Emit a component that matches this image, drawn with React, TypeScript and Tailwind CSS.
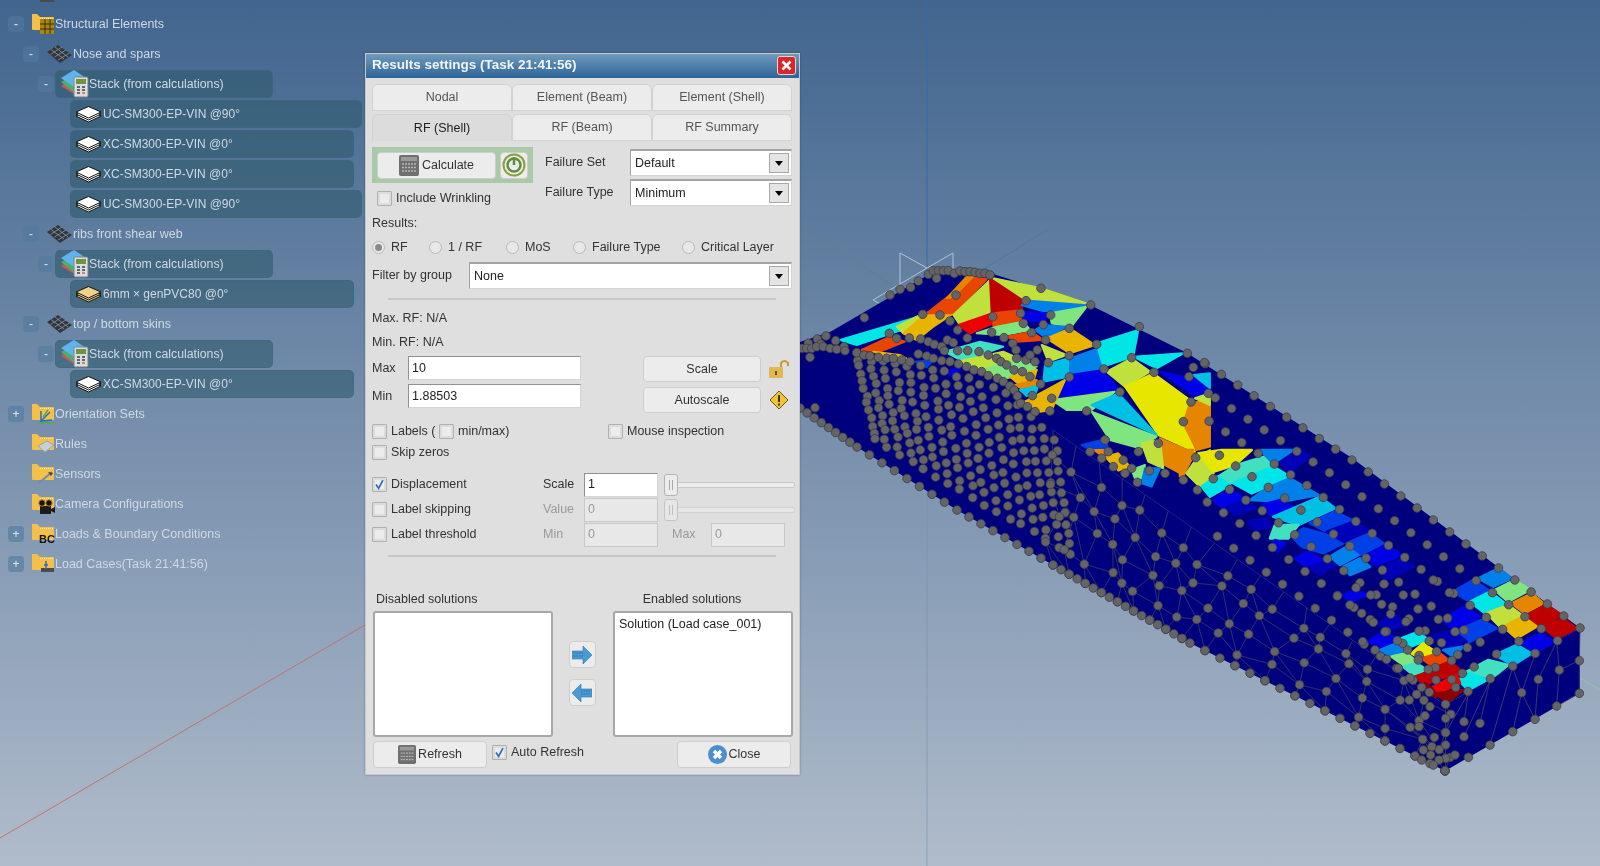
import type { ReactNode } from "react";

type Pt = [number, number];

// ---------- 3D scene data ----------
const lerpPath = (pts: Pt[], t: number): Pt => {
  const f = Math.min(t, 0.9999) * (pts.length - 1);
  const i = Math.floor(f);
  const k = f - i;
  return [pts[i][0] + (pts[i + 1][0] - pts[i][0]) * k, pts[i][1] + (pts[i + 1][1] - pts[i][1]) * k];
};
const noise = (a: number, b: number) => {
  const v = Math.sin(a * 12.9898 + b * 78.233) * 43758.5453;
  return v - Math.floor(v) - 0.5;
};
const yAt = (pts: Pt[], x: number) => {
  for (let i = 0; i < pts.length - 1; i++) {
    if (x <= pts[i + 1][0]) {
      const k = (x - pts[i][0]) / (pts[i + 1][0] - pts[i][0]);
      return pts[i][1] + (pts[i + 1][1] - pts[i][1]) * k;
    }
  }
  return pts[pts.length - 1][1];
};

const arc: Pt[] = [[800, 348], [857, 352], [923, 357], [967, 367], [1007, 383], [1030, 407], [1053, 430]];
const bottom: Pt[] = [[800, 408], [857, 447], [957, 510], [1053, 565], [1190, 643], [1445, 771]];

const c = {
  maroon: "#8c0000", dred: "#bf0000", red: "#ee0000", ored: "#e84500", orange: "#e68500",
  amber: "#e8b400", yellow: "#e6e600", lime: "#c0e03c", green: "#7fe67f", teal: "#40e0c0",
  cyan: "#00e5e5", sky: "#00bfe5", azure: "#0080e8", blue: "#0040e8", blue2: "#0000e8", dblue: "#0000b8",
};

// polygons read off the nose area
const nosePolys: [string, string][] = [
  [c.cyan, "150,330 385,260 350,295 200,345"],
  [c.lime, "320,290 385,258 410,250 340,310"],
  [c.amber, "340,310 410,250 490,250 430,290 380,330"],
  [c.ored, "410,250 550,140 590,148 490,250"],
  [c.orange, "470,205 530,140 550,140 490,200"],
  [c.lime, "490,255 600,150 605,250 510,285"],
  [c.dred, "600,145 700,210 695,240 605,248"],
  [c.red, "505,285 605,250 610,280 540,310"],
  [c.ored, "610,250 695,240 700,275 610,290"],
  [c.green, "560,310 620,290 700,275 720,300 640,315"],
  [c.azure, "695,225 740,205 890,225 780,250"],
  [c.blue2, "695,245 780,250 760,275 700,270"],
  [c.green, "780,250 890,230 840,295 785,280"],
  [c.lime, "610,145 755,175 890,220 700,205"],
  [c.azure, "735,300 760,285 830,290 770,325"],
  [c.ored, "650,320 725,305 760,330 680,335"],
  [c.amber, "770,325 840,295 915,345 840,370"],
  [c.lime, "755,345 830,375 775,395"],
  [c.sky, "765,405 835,385 835,440 760,455"],
  [c.azure, "840,385 925,355 935,415 840,435"],
  [c.cyan, "920,340 1045,300 1030,380 940,410"],
  [c.lime, "950,425 1025,385 1080,425 1005,470"],
  [c.yellow, "1005,470 1090,430 1200,510 1180,570 1215,665 1105,615"],
  [c.blue2, "795,500 840,435 940,420 985,480"],
  [c.green, "785,510 975,485 905,540 830,540"],
  [c.sky, "905,525 985,490 1100,615"],
  [c.green, "905,545 1100,620 1050,655 960,630"],
  [c.amber, "705,515 825,450 785,540 750,545"],
  [c.orange, "1110,625 1215,670 1180,735 1115,700"],
  [c.lime, "1055,640 1110,630 1120,715 1075,695"],
  [c.orange, "1180,580 1200,520 1260,510 1260,650 1220,660"],
  [c.lime, "1190,730 1220,685 1260,660 1260,740 1225,765"],
  [c.cyan, "1030,380 1180,370 1100,415"],
  [c.blue2, "1110,425 1200,445 1260,465 1225,505"],
  [c.sky, "1210,435 1260,430 1260,475"],
  [c.lime, "1215,505 1260,490 1260,525"],
  [c.cyan, "1235,760 1260,740 1260,795"],
  // small strips by the nose lip
  [c.ored, "215,360 300,320 345,335 270,365"],
  [c.amber, "250,365 330,375 360,392 300,385"],
  [c.teal, "465,365 570,335 640,350 520,395"],
  [c.lime, "500,395 640,365 740,410 620,440"],
  [c.green, "590,415 700,385 740,420 650,445"],
  [c.amber, "660,440 740,420 730,455 690,465"],
  [c.orange, "675,465 740,450 745,465 700,478"],
  [c.sky, "690,480 745,468 735,495 710,498"],
  [c.blue, "375,395 430,390 410,412"],
  [c.blue2, "460,425 510,415 490,440"],
  [c.blue, "875,645 945,628 955,655 900,660"],
  [c.orange, "912,660 945,660 940,680"],
  [c.amber, "945,680 985,670 1020,710 985,722"],
  [c.green, "1025,720 1065,705 1060,745 1035,745"],
  [c.azure, "1065,715 1110,715 1085,770 1055,760"],
];

// polygons read off the far end of the wing
const tailPolys: [string, string][] = [
  [c.orange, "0,0 40,0 10,75 0,78"],
  [c.lime, "20,70 50,30 100,70 60,110"],
  [c.yellow, "55,10 125,0 215,0 165,45 100,65"],
  [c.teal, "115,80 170,45 270,15 280,45 215,70 150,100"],
  [c.azure, "240,0 340,0 280,40"],
  [c.dblue, "300,40 360,0 390,20 330,65"],
  [c.cyan, "65,110 110,80 150,105 90,140"],
  [c.cyan, "160,100 280,50 330,80 215,130"],
  [c.blue2, "100,150 150,120 195,145 130,175"],
  [c.dblue, "140,170 190,150 225,175 165,195"],
  [c.azure, "210,150 260,115 330,85 415,135 305,155"],
  [c.blue2, "245,165 300,150 345,175 270,195"],
  [c.sky, "280,200 340,175 420,140 465,175 355,225"],
  [c.teal, "270,265 285,225 355,225 325,265"],
  [c.blue, "390,220 465,185 515,210 440,245"],
  [c.dblue, "205,215 265,205 270,230 225,240"],
  [c.blue, "335,260 370,235 445,255 490,280 430,310 365,290"],
  [c.dblue, "440,245 520,215 565,240 490,275"],
  [c.blue, "500,280 570,250 610,280 540,315"],
  [c.blue2, "345,325 385,305 435,335 380,350"],
  [c.dblue, "385,350 435,335 465,345 420,375"],
  [c.azure, "450,320 500,290 535,315 480,345"],
  [c.azure, "490,350 540,325 570,350 510,375"],
  [c.blue2, "555,320 620,285 665,315 590,345"],
  [c.dblue, "595,360 665,325 700,350 620,390"],
  [c.blue2, "490,435 530,420 560,435 510,455"],
  [c.blue2, "270,290 285,270 315,280 290,305"],
  [c.blue, "820,425 880,390 925,420 860,450"],
  [c.azure, "895,385 955,355 995,385 940,410"],
  [c.cyan, "870,455 930,425 975,460 915,490"],
  [c.green, "945,420 1005,390 1050,420 985,455"],
  [c.orange, "995,460 1055,430 1090,460 1035,490"],
  [c.lime, "920,490 985,465 1025,495 960,530"],
  [c.dred, "1040,495 1100,465 1145,495 1080,530"],
  [c.dred, "1085,530 1150,505 1190,535 1130,565"],
  [c.amber, "970,530 1030,500 1070,530 1010,565"],
  [c.blue2, "785,510 855,470 900,500 825,540"],
  [c.blue, "835,540 905,510 950,535 860,580"],
  [c.blue2, "1025,580 1080,550 1125,575 1065,605"],
  [c.dblue, "760,560 815,540 860,575 800,600"],
  [c.sky, "945,615 1010,585 1055,610 1000,645"],
  [c.teal, "860,665 925,630 985,645 935,685"],
  [c.cyan, "835,690 870,670 920,690 865,720"],
  [c.azure, "790,600 850,590 820,620"],
  [c.dblue, "595,520 640,495 680,520 620,545"],
  [c.blue2, "565,575 610,545 660,570 600,590"],
  [c.cyan, "665,565 715,545 745,570 690,590"],
  [c.azure, "600,600 650,580 680,600 635,620"],
  [c.yellow, "695,610 730,580 765,605 720,625"],
  [c.green, "635,620 680,610 710,635 670,645"],
  [c.teal, "670,650 710,640 740,660 700,675"],
  [c.ored, "725,625 780,610 810,635 760,650"],
  [c.dred, "745,660 810,635 840,660 830,680 765,685"],
  [c.dred, "705,680 745,665 765,690 735,705"],
  [c.red, "760,710 830,675 840,700 775,730"],
  [c.maroon, "770,730 850,720 800,760"],
  [c.maroon, "735,700 760,720 770,740 750,735"],
];

const z6 = (p: number[]): Pt => [790 + p[0] / 3, 230 + p[1] / 3];
const z7 = (p: number[]): Pt => [1180 + p[0] / 3, 450 + p[1] / 3];

const noseNodes: number[][] = [
  [753,175],[902,225],[1048,290],[1192,370],[1210,412],[1243,398],[1197,440],[1025,383],[1092,427],[920,343],[942,417],[838,295],[990,486],[1203,516],[1180,575],[1255,490],[1105,640],[1217,683],[1045,665],[1078,722],[1125,730],[1180,750],[1222,780],[945,630],[890,543],[838,377],[838,441],[775,398],[767,330],[708,212],[692,250],[782,255],[760,284],[700,280],[725,308],[608,260],[605,307],[642,323],[498,195],[398,253],[450,255],[480,273],[503,300],[532,324],[472,330],[490,338],[223,263],[298,310],[358,324],[320,325],[392,327],[415,335],[433,343],[455,350],[463,362],[503,362],[533,362],[567,365],[595,375],[620,385],[633,395],[650,405],[672,420],[697,425],[720,440],[752,462],[785,505],[780,543],[727,497],[668,340],[678,360],[680,385],[708,390],[720,375],[742,360],[735,395],[108,318],[137,332],[162,350],[55,340],[82,327],[92,342],[60,382],[75,533],
  [300,195],[330,178],[362,172],[385,153],[415,133],[430,122],[445,122],[460,122],[475,122],[493,130],[510,123],[525,125],[540,125],[555,127],[570,130],[585,130],[600,135],[440,145],
  [35,355],[50,355],[65,355],[80,350],[100,350],[120,355],[140,358],[165,362],[200,368],[222,375],[240,378],[265,382],[290,385],[310,385],[335,390],[360,395],[385,372],[410,378],[430,385],[455,392],[480,395],[505,402],[530,410],[552,420],[575,425],[595,437],[622,445],[640,455],[660,468],[672,480],[682,498],[692,520],[712,530],[735,545],
  [945,630],[900,665],[955,665],[935,685],[970,710],[1000,690],[1025,715],[1005,730],[1042,757],
];

const tailNodes: number[][] = [
  [1198,632],[1198,730],[1138,660],[1130,768],[1075,688],[1025,728],[1065,808],[998,845],[930,885],[865,922],[900,820],[852,860],[852,815],[825,915],[797,848],[797,885],[797,925],[777,930],[760,945],[795,962],[755,890],[763,862],[730,900],[752,915],[725,930],[797,805],[735,797],[717,830],[688,750],[750,770],[710,733],
  [745,658],[768,690],[827,712],[715,630],[683,600],[652,572],[717,543],[748,573],[770,605],[815,632],[847,670],[678,515],[632,492],[615,545],[580,517],[548,575],[585,600],[620,628],[655,655],[690,684],[725,712],
  [612,402],[528,413],[572,435],[472,438],[510,465],[545,490],[605,463],[670,435],[714,477],[760,390],[808,428],[775,508],[825,545],[862,593],
];

// fan of mesh lines on the end face
const endLines: number[][] = [
  [797,768,797,962],[865,730,797,848],[865,730,852,815],[930,692,852,860],[930,692,900,820],[998,652,930,885],[998,652,1025,728],[1065,613,1025,728],[1025,728,998,845],[1025,728,1065,808],[1075,688,1065,808],[1130,575,1075,688],[1130,575,1138,660],[1138,660,1130,768],[1200,535,1198,632],[1198,632,1198,730],[1138,660,1198,632],[1198,730,1130,768],
];

// lattice on the top face, far end (the rows bend a little as they go back)
const latticeNodes: Pt[] = [];
for (let i = 0; i <= 26; i++) {
  for (let j = 0; j <= 6; j++) {
    const x = 1580 - 16.3 * i - 22.4 * j;
    const y = 628 - 12 * i + 12.7 * j + Math.max(0, i - 14) * 1.3;
    if (x > 1205) latticeNodes.push([x, y]);
  }
}

// dense region of the side face (nose rib)
const denseNodes: Pt[] = [];
for (let col = 0; col <= 16; col++) {
  const x = 857 + (196 * col) / 16;
  const top = yAt(arc, x);
  const bot = yAt(bottom, x);
  const rows = 13;
  for (let r = 1; r < rows; r++) {
    denseNodes.push([x + r * 1.5 + noise(col, r) * 3, top + ((bot - top) * r) / rows + noise(r, col) * 3]);
  }
}

// sparse grid of the side face
const sideTop: Pt[] = [[1053, 430], [1445, 705]];
const sideBot: Pt[] = [[1053, 565], [1190, 643], [1445, 771]];
const COLS = 17;
const ROWS = 5;
const sideGrid: Pt[][] = [];
for (let k = 0; k <= COLS; k++) {
  const t = lerpPath(sideTop, k / COLS);
  const b = lerpPath(sideBot, k / COLS);
  const col: Pt[] = [];
  for (let r = 0; r <= ROWS; r++) {
    const edge = r === 0 || r === ROWS;
    const jx = edge ? 0 : noise(k + 3, r) * 16;
    const jy = edge ? 0 : noise(r + 7, k) * 12;
    col.push([t[0] + ((b[0] - t[0]) * r) / ROWS + jx, t[1] + ((b[1] - t[1]) * r) / ROWS + jy]);
  }
  sideGrid.push(col);
}
const sideLines: [Pt, Pt][] = [];
sideGrid.forEach((col, k) =>
  col.forEach((p, r) => {
    if (r < ROWS) sideLines.push([p, col[r + 1]]);
    if (k < COLS && r > 0 && r < ROWS) sideLines.push([p, sideGrid[k + 1][r]]);
    if (k < COLS && r > 0 && r < ROWS && (k + r) % 2 === 0) sideLines.push([p, sideGrid[k + 1][r + 1]]);
  })
);

// nodes along the lower edge
const edgeNodes: Pt[] = [];
for (let i = 0; i <= 24; i++) edgeNodes.push(lerpPath(bottom.slice(0, 4), i / 24));
for (let i = 1; i <= 34; i++) edgeNodes.push(lerpPath([[1053, 565], [1190, 643], [1445, 771]], i / 34));

const allNodes: Pt[] = [
  ...denseNodes,
  ...sideGrid.flat().filter((_, i) => i % 6 !== 0),
  ...edgeNodes,
  ...latticeNodes,
  ...noseNodes.map(z6),
  ...tailNodes.map(z7),
];

function Scene() {
  return (
    <svg className="absolute inset-0" width={1600} height={866} viewBox="0 0 1600 866">
      <line x1="927" y1="0" x2="927" y2="280" stroke="#3a68a8" strokeWidth="1" />
      <line x1="927" y1="280" x2="927" y2="866" stroke="#7690ae" strokeWidth="1" opacity="0.6" />
      <line x1="0" y1="838" x2="365" y2="625" stroke="#c4716f" strokeWidth="1" />
      <line x1="1580" y1="678" x2="1600" y2="690" stroke="#8fc8a0" strokeWidth="1" />
      <line x1="806" y1="230" x2="900" y2="290" stroke="#5f7f88" strokeWidth="0.7" />
      <line x1="1047" y1="230" x2="976" y2="274" stroke="#56718c" strokeWidth="0.7" />
      <polyline points="900,293 900,253 927,268 953,253 953,272" fill="none" stroke="#b4c2d4" strokeWidth="1" />
      <line x1="873" y1="300" x2="927" y2="268" stroke="#b4c2d4" strokeWidth="1" />
      <line x1="873" y1="300" x2="884" y2="306" stroke="#b4c2d4" strokeWidth="1" />

      {/* top face */}
      <polygon points="800,342 830,332 940,268 990,273 1090,305 1187,353 1352,458 1580,628 1445,705 1053,430 800,348" fill="#00007f" />
      {/* side face */}
      <polygon points={[...arc, [1445, 705], [1445, 771], ...[...bottom].reverse().slice(1)].join(" ")} fill="#00007f" />
      {/* end face */}
      <polygon points="1445,705 1580,628 1580,693 1445,771" fill="#00007f" />

      <g transform="translate(790 230) scale(0.3333)">
        {nosePolys.map(([fill, points], i) => (
          <polygon key={i} points={points} fill={fill} stroke={fill} strokeWidth="6" strokeLinejoin="round" />
        ))}
      </g>
      <g transform="translate(1180 450) scale(0.3333)">
        {tailPolys.map(([fill, points], i) => (
          <polygon key={i} points={points} fill={fill} stroke={fill} strokeWidth="8" strokeLinejoin="round" />
        ))}
        {endLines.map((l, i) => (
          <line key={i} x1={l[0]} y1={l[1]} x2={l[2]} y2={l[3]} stroke="#38386a" strokeWidth="3" />
        ))}
      </g>

      {sideLines.map(([a, b], i) => (
        <line key={i} x1={a[0]} y1={a[1]} x2={b[0]} y2={b[1]} stroke="#30306a" strokeWidth="1" />
      ))}
      {allNodes.map(([x, y], i) => (
        <circle key={i} cx={x} cy={y} r="4.3" fill="#646464" stroke="#3c3c4c" strokeWidth="0.8" />
      ))}
    </svg>
  );
}

// ---------- tree icons ----------
function Folder({ children }: { children?: ReactNode }) {
  return (
    <svg width="23" height="22" viewBox="0 0 23 22" className="shrink-0">
      <path d="M0 1h5l3 3h13a1 1 0 0 1 1 1v11a1 1 0 0 1-1 1H1a1 1 0 0 1-1-1z" fill="#f4c04a" />
      <path d="M8 5.500h13" stroke="#fbe7a8" strokeDasharray="1 1" />
      {children}
    </svg>
  );
}

function MeshIcon() {
  return (
    <svg width="25" height="18" viewBox="0 0 25 18" className="shrink-0">
      <path d="M0 7 11 0l14 10-12 8z" fill="#33373d" />
      <path d="M4 4.500 17 14M8 2l13 10M3.500 9.500 15 2M7.500 12 19 5M11 15 22.500 8" stroke="#8b97a3" strokeWidth="0.8" />
    </svg>
  );
}

function LayerIcon({ tone = "#ffffff" }: { tone?: string }) {
  return (
    <svg width="27" height="17" viewBox="0 0 27 17" className="shrink-0">
      <path d="M1 10 13.500 4 26 10 13.500 16z" fill={tone} stroke="#111" strokeWidth="1" />
      <path d="M1 8 13.500 2 26 8 13.500 14z" fill={tone} stroke="#111" strokeWidth="1" />
      <path d="M1 6 13.500 0.500 26 6 13.500 12z" fill={tone} stroke="#111" strokeWidth="1" />
    </svg>
  );
}

function StackIcon() {
  return (
    <svg width="29" height="28" viewBox="0 0 29 28" className="shrink-0">
      <path d="M1 16 14 8l8 6v12l-8-2z" fill="#d5525c" />
      <path d="M1 12 14 5l8 6v10l-8 2z" fill="#4caf6a" />
      <path d="M1 8 14 0l12 8-12 9z" fill="#5fb4ee" />
      <rect x="14" y="7" width="14" height="20" rx="1.500" fill="#d9dde0" stroke="#7c8288" />
      <rect x="16" y="9" width="10" height="5" fill="#6f9440" />
      <path d="M17 17h3M22 17h3M17 20h3M22 20h3M17 23h3" stroke="#3c4044" strokeWidth="1.500" />
      <path d="M22 23h3" stroke="#d0702c" strokeWidth="1.500" />
    </svg>
  );
}

function Expander({ sign }: { sign?: string }) {
  if (!sign) return <span className="w-4 h-4 shrink-0" />;
  return (
    <span className="w-4 h-4 shrink-0 rounded-[4px] bg-[#527a9e]/60 flex items-center justify-center text-[12px] leading-none text-[#dfe7ee]">
      {sign}
    </span>
  );
}

function Group({ sign, icon, label }: { sign?: string; icon: ReactNode; label: string }) {
  return (
    <div className="h-[30px] flex items-center pl-2 gap-2">
      <Expander sign={sign} />
      <span className="flex items-center gap-px">
        {icon}
        <span className="-ml-px">{label}</span>
      </span>
    </div>
  );
}

function Mesh({ label }: { label: string }) {
  return (
    <div className="h-[30px] flex items-center pl-[23px] gap-2">
      <Expander sign="-" />
      <span className="flex items-center gap-0">
        <MeshIcon />
        <span className="ml-px">{label}</span>
      </span>
    </div>
  );
}

function Stack() {
  return (
    <div className="h-[30px] flex items-center pl-[38px]">
      <Expander sign="-" />
      <div className="ml-px w-[218px] h-[28px] rounded-[5px] bg-[#2f5a6c]/60 border border-[#41687f]/60 flex items-center pl-[4px]">
        <StackIcon />
        <span className="text-[12.3px]">Stack (from calculations)</span>
      </div>
    </div>
  );
}

function Ply({ label, wide, tone }: { label: string; wide?: boolean; tone?: string }) {
  return (
    <div className="h-[30px] flex items-center pl-[70px]">
      <div
        className={`${wide ? "w-[292px]" : "w-[284px]"} h-[28px] rounded-[5px] bg-[#2f5a6c]/60 border border-[#41687f]/60 flex items-center pl-[4px]`}
      >
        <LayerIcon tone={tone} />
        <span className="ml-[1px] text-[12px]">{label}</span>
      </div>
    </div>
  );
}

function Tree() {
  return (
    <div className="relative w-[365px] shrink-0 -mt-[21px] text-[12.5px] text-[#cfd9e3]">
      <div className="h-[30px] flex items-center pl-[32px]">
        <Folder>
          <rect x="8" y="7" width="14" height="12" fill="#4b4b4b" />
        </Folder>
      </div>
      <Group
        sign="-"
        label="Structural Elements"
        icon={
          <Folder>
            <rect x="8" y="6" width="14" height="15" fill="#a8860f" />
            <path d="M8 11h14M8 16h14M13 6v15M18 6v15" stroke="#3a2c05" strokeWidth="1" />
          </Folder>
        }
      />
      <Mesh label="Nose and spars" />
      <Stack />
      <Ply label="UC-SM300-EP-VIN @90°" wide />
      <Ply label="XC-SM300-EP-VIN @0°" />
      <Ply label="XC-SM300-EP-VIN @0°" />
      <Ply label="UC-SM300-EP-VIN @90°" wide />
      <Mesh label="ribs front shear web" />
      <Stack />
      <Ply label="6mm × genPVC80 @0°" tone="#f0d08c" />
      <Mesh label="top / bottom skins" />
      <Stack />
      <Ply label="XC-SM300-EP-VIN @0°" />
      <Group
        sign="+"
        label="Orientation Sets"
        icon={
          <Folder>
            <path d="M9 20V8M9 18l11-1M9 18l9-9" stroke="#2b6cc4" strokeWidth="1.500" />
            <path d="M7 20h15M16 7l-5 7" stroke="#49b24a" strokeWidth="1.500" />
          </Folder>
        }
      />
      <Group
        label="Rules"
        icon={
          <Folder>
            <path d="M6 13l9-5 7 4-9 7z" fill="#c8ced6" stroke="#98a2ae" />
          </Folder>
        }
      />
      <Group
        label="Sensors"
        icon={
          <Folder>
            <path d="M7 20 20 9" stroke="#6f8ca8" strokeWidth="2" />
            <path d="M16 9l5 1-2 3z" fill="#444" />
          </Folder>
        }
      />
      <Group
        label="Camera Configurations"
        icon={
          <Folder>
            <rect x="8" y="13" width="11" height="8" fill="#1c1c1c" />
            <circle cx="10" cy="10" r="3.200" fill="#111" stroke="#b78a1c" />
            <circle cx="17" cy="10" r="3.200" fill="#111" stroke="#b78a1c" />
            <path d="M19 16l4-2v6l-4-2z" fill="#1c1c1c" />
          </Folder>
        }
      />
      <Group
        sign="+"
        label="Loads & Boundary Conditions"
        icon={
          <Folder>
            <text x="7" y="20" fontSize="11" fontWeight="700" fill="#111" fontFamily="Liberation Sans">
              BC
            </text>
          </Folder>
        }
      />
      <Group
        sign="+"
        label="Load Cases(Task 21:41:56)"
        icon={
          <Folder>
            <rect x="9" y="15" width="13" height="4" fill="#4b4b4b" />
            <path d="M14 8v8M12 12h4" stroke="#2b6cc4" strokeWidth="1.500" />
          </Folder>
        }
      />
    </div>
  );
}

// ---------- dialog widgets ----------
function Tab({ label, active }: { label: string; active?: boolean }) {
  return (
    <div
      className={`flex-1 h-[27px] rounded-t-[6px] border border-[#d2d2d2] flex items-center justify-center ${
        active ? "bg-[#dcdcdc] border-b-0 text-[#222]" : "bg-[#ececec] text-[#555]"
      }`}
    >
      {label}
    </div>
  );
}

function Combo({ label, className }: { label: string; className: string }) {
  return (
    <div className={`${className} h-[27px] bg-white border-t-2 border-l border-[#a4a4a4] border-b border-r border-b-[#d4d4d4] border-r-[#d4d4d4] flex items-center pl-1`}>
      <span className="flex-1 text-[#222]">{label}</span>
      <span className="w-[20px] h-[20px] mr-[2px] bg-[#e4e4e4] border border-[#a8a8a8] flex items-center justify-center">
        <span className="w-0 h-0 border-x-[4px] border-x-transparent border-t-[5px] border-t-black" />
      </span>
    </div>
  );
}

function Box({ checked }: { checked?: boolean }) {
  return (
    <span className="relative inline-block w-[15px] h-[15px] shrink-0 bg-[#dcdcdc] border border-[#b0b0b0] rounded-[1px]">
      <span className="absolute inset-[2px] bg-[#ececec]" />
      {checked && (
        <svg className="absolute inset-0" viewBox="0 0 15 15">
          <path d="M3.500 7.500 6.500 12 11.500 2.500" fill="none" stroke="#2f6db5" strokeWidth="2" />
        </svg>
      )}
    </span>
  );
}

function Check({ label, checked, className = "" }: { label: string; checked?: boolean; className?: string }) {
  return (
    <span className={`inline-flex items-center gap-[4px] whitespace-nowrap ${className}`}>
      <Box checked={checked} />
      <span>{label}</span>
    </span>
  );
}

function Radio({ label, on, className }: { label: string; on?: boolean; className: string }) {
  return (
    <span className={`${className} inline-flex items-center gap-[6px]`}>
      <span className="w-[13px] h-[13px] rounded-full bg-[#e8e8e8] border border-[#b8b8b8] flex items-center justify-center">
        {on && <span className="w-[7px] h-[7px] rounded-full bg-[#8a8a8a]" />}
      </span>
      <span>{label}</span>
    </span>
  );
}

function Btn({ children, className }: { children: ReactNode; className: string }) {
  return (
    <div className={`${className} bg-[#ececec] border border-[#cecece] rounded-[4px] flex items-center justify-center text-[#333]`}>
      {children}
    </div>
  );
}

function Field({ value, className, disabled }: { value: string; className: string; disabled?: boolean }) {
  return (
    <div
      className={`${className} flex items-center pl-[3px] border ${
        disabled
          ? "bg-[#e8e8e8] border-[#c8c8c8] text-[#9a9a9a]"
          : "bg-white border-[#d4d4d4] border-t-[#909090] border-l-[#909090] text-[#222]"
      }`}
    >
      {value}
    </div>
  );
}

function Slider({ disabled }: { disabled?: boolean }) {
  return (
    <div className={`relative w-[131px] h-[22px] flex items-center ${disabled ? "opacity-60" : ""}`}>
      <span className="w-full h-[6px] bg-[#ececec] border border-[#c8c8c8] rounded-[2px]" />
      <span className="absolute left-0 top-0 w-[14px] h-[22px] bg-[#ececec] border border-[#b4b4b4] rounded-[3px] flex items-center justify-center gap-[2px]">
        <span className="w-px h-[10px] bg-[#aaa]" />
        <span className="w-px h-[10px] bg-[#aaa]" />
      </span>
    </div>
  );
}

function CalcIcon({ size = 20 }: { size?: number }) {
  return (
    <svg width={size} height={size + 1} viewBox="0 0 20 21" className="shrink-0">
      <rect width="20" height="21" rx="2" fill="#6f6f6f" />
      <rect x="2" y="2" width="16" height="4" fill="#9a9a9a" />
      <path d="M3 9h14M3 12.500h14M3 16h14" stroke="#b6b6b6" strokeWidth="1.500" strokeDasharray="2 1" />
    </svg>
  );
}

function Arrow({ left }: { left?: boolean }) {
  return (
    <svg width="20" height="18" viewBox="0 0 20 18">
      <path
        d={left ? "M0 9 9 0v5h11v8H9v5z" : "M20 9 11 0v5H0v8h11v5z"}
        fill="#4a9bd4"
        stroke="#2f78b0"
        strokeWidth="0.600"
      />
      <path d={left ? "M9 7h9M9 10h9" : "M2 7h9M2 10h9"} stroke="#2b6ea6" strokeDasharray="1.500 1" />
    </svg>
  );
}

function Dialog() {
  return (
    <div className="relative w-[435px] h-[722px] mt-[53px] shrink-0 bg-[#dfdfdf] border border-[#c8c8c8] flex flex-col text-[12.5px] text-[#333] shadow-[0_0_2px_rgba(0,0,0,0.3)]">
      {/* title bar */}
      <div className="h-[24px] shrink-0 bg-linear-to-b from-[#6f9abb] to-[#2c6598] flex items-start pt-[2px] pl-[6px] pr-[3px]">
        <span className="flex-1 font-bold text-[13.5px] leading-[18px] text-[#f2f5f8]">Results settings (Task 21:41:56)</span>
        <span className="w-[19px] h-[19px] rounded-[3px] bg-[#d8262a] border border-[#f0d0c8] flex items-center justify-center">
          <svg width="11" height="11" viewBox="0 0 11 11">
            <path d="M1.500 1.500 9.500 9.500M9.500 1.500 1.500 9.500" stroke="#fff" strokeWidth="2.500" />
          </svg>
        </span>
      </div>

      <div className="flex-1 px-[6px] flex flex-col">
        {/* tabs */}
        <div className="flex w-[420px] mt-[6px]">
          <Tab label="Nodal" />
          <Tab label="Element (Beam)" />
          <Tab label="Element (Shell)" />
        </div>
        <div className="flex w-[420px] mt-[3px]">
          <Tab label="RF (Shell)" active />
          <Tab label="RF (Beam)" />
          <Tab label="RF Summary" />
        </div>

        {/* calculate + failure */}
        <div className="flex mt-[6px] h-[62px]">
          <div className="w-[161px] shrink-0">
            <div className="h-[36px] bg-[#a9c9a9] flex items-center pl-[5px] gap-[4px]">
              <Btn className="w-[119px] h-[27px] gap-[3px]">
                <CalcIcon />
                <span>Calculate</span>
              </Btn>
              <Btn className="w-[28px] h-[27px]">
                <svg width="24" height="24" viewBox="0 0 24 24">
                  <circle cx="12" cy="12" r="10.500" fill="none" stroke="#8aa03c" strokeWidth="2" />
                  <circle cx="12" cy="12" r="6.500" fill="none" stroke="#5f9040" strokeWidth="2.500" />
                  <path d="M12 4v8" stroke="#5f9040" strokeWidth="2.500" />
                </svg>
              </Btn>
            </div>
            <Check label="Include Wrinkling" className="ml-[5px] mt-[6px]" />
          </div>
          <div className="mt-[2px] ml-[12px] flex-1 grid grid-cols-[85px_162px] grid-rows-[27px_27px] gap-y-[3px] items-center">
            <span>Failure Set</span>
            <Combo label="Default" className="w-[162px]" />
            <span>Failure Type</span>
            <Combo label="Minimum" className="w-[162px]" />
          </div>
        </div>

        <div className="mt-[4px] h-[20px] flex items-center">Results:</div>
        <div className="flex h-[28px] items-center">
          <Radio label="RF" on className="w-[57px]" />
          <Radio label="1 / RF" className="w-[77px]" />
          <Radio label="MoS" className="w-[67px]" />
          <Radio label="Failure Type" className="w-[109px]" />
          <Radio label="Critical Layer" className="w-[100px]" />
        </div>
        <div className="flex items-center mt-[1px]">
          <span className="w-[97px]">Filter by group</span>
          <Combo label="None" className="w-[323px]" />
        </div>
        <div className="h-[2px] bg-[#c8c8c8] mx-[16px] w-[388px] mt-[9px]" />

        <div className="mt-[8px] h-[20px] flex items-center">Max. RF: N/A</div>
        <div className="mt-[4px] h-[20px] flex items-center">Min. RF: N/A</div>

        {/* scale inputs */}
        <div className="flex mt-[4px]">
          <div className="grid grid-cols-[36px_173px] grid-rows-[24px_24px] gap-y-[4px] items-center">
            <span>Max</span>
            <Field value="10" className="h-[24px]" />
            <span>Min</span>
            <Field value="1.88503" className="h-[24px]" />
          </div>
          <div className="ml-[62px] flex flex-col gap-[5px]">
            <div className="flex items-center gap-[8px]">
              <Btn className="w-[118px] h-[26px]">Scale</Btn>
              <svg width="20" height="22" viewBox="0 0 20 22">
                <path d="M12 9V5a4 4 0 0 1 7 0v3" fill="none" stroke="#c99a32" strokeWidth="2" />
                <rect x="0" y="9" width="14" height="11" rx="1" fill="#e3b650" />
                <rect x="6" y="13" width="2" height="4" fill="#6f4f10" />
              </svg>
            </div>
            <div className="flex items-center gap-[8px]">
              <Btn className="w-[118px] h-[26px]">Autoscale</Btn>
              <svg width="20" height="20" viewBox="0 0 20 20">
                <path d="M10 1 19 10 10 19 1 10z" fill="#f4c430" stroke="#6a5a20" strokeWidth="1" />
                <path d="M10 5v7M10 13.500v2" stroke="#333" strokeWidth="2" />
              </svg>
            </div>
          </div>
        </div>

        {/* label options */}
        <div className="flex items-center mt-[8px] h-[21px]">
          <Box />
          <span className="ml-[4px] w-[48px] whitespace-nowrap">Labels (</span>
          <Check label="min/max)" className="w-[169px]" />
          <Check label="Mouse inspection" />
        </div>
        <div className="flex items-center h-[21px]">
          <Check label="Skip zeros" />
        </div>

        {/* displacement block */}
        <div className="mt-[9px] grid grid-cols-[171px_41px_80px_132px] grid-rows-[25px_25px_25px] items-center">
          <Check label="Displacement" checked />
          <span>Scale</span>
          <Field value="1" className="w-[74px] h-[24px]" />
          <Slider />

          <Check label="Label skipping" />
          <span className="text-[#9a9a9a]">Value</span>
          <Field value="0" disabled className="w-[74px] h-[24px]" />
          <Slider disabled />

          <Check label="Label threshold" />
          <span className="text-[#9a9a9a]">Min</span>
          <Field value="0" disabled className="w-[74px] h-[24px]" />
          <div className="flex items-center whitespace-nowrap">
            <span className="w-[47px] text-[#9a9a9a] pl-[8px] shrink-0">Max</span>
            <Field value="0" disabled className="w-[74px] h-[24px] shrink-0" />
          </div>
        </div>
        <div className="h-[2px] bg-[#c8c8c8] mx-[16px] w-[388px] mt-[8px]" />

        {/* solutions */}
        <div className="flex mt-[32px] h-[20px] items-center">
          <span className="w-[240px] pl-[4px]">Disabled solutions</span>
          <span className="w-[160px] text-center">Enabled solutions</span>
        </div>
        <div className="flex mt-[2px] ml-px h-[126px]">
          <div className="w-[180px] bg-white border-2 border-[#a8a8a8] rounded-[3px]" />
          <div className="w-[58px] flex flex-col items-center pt-[30px] gap-[11px]">
            <Btn className="w-[27px] h-[27px]">
              <Arrow />
            </Btn>
            <Btn className="w-[27px] h-[27px]">
              <Arrow left />
            </Btn>
          </div>
          <div className="ml-[2px] w-[180px] bg-white border-2 border-[#a8a8a8] rounded-[3px] pl-[4px] pt-[2px] text-[#222]">
            Solution (Load case_001)
          </div>
        </div>
        <div className="flex mt-[4px] ml-px items-start">
          <Btn className="w-[114px] h-[27px] gap-[2px]">
            <CalcIcon size={18} />
            <span>Refresh</span>
          </Btn>
          <Check label="Auto Refresh" checked className="ml-[5px] mt-[2px] w-[185px]" />
          <Btn className="w-[114px] h-[27px] gap-[2px]">
            <svg width="19" height="19" viewBox="0 0 19 19">
              <circle cx="9.500" cy="9.500" r="9.500" fill="#4a8fd0" />
              <path d="M6 6 13 13M13 6 6 13" stroke="#fff" strokeWidth="3.500" />
            </svg>
            <span>Close</span>
          </Btn>
        </div>
      </div>
    </div>
  );
}

export default function App() {
  return (
    <div className="relative w-[1600px] h-[866px] overflow-hidden flex items-start bg-linear-to-b from-[#41658e] to-[#b0bccb] font-['Liberation_Sans',sans-serif] blur-[0.5px]">
      <Scene />
      <Tree />
      <Dialog />
    </div>
  );
}
